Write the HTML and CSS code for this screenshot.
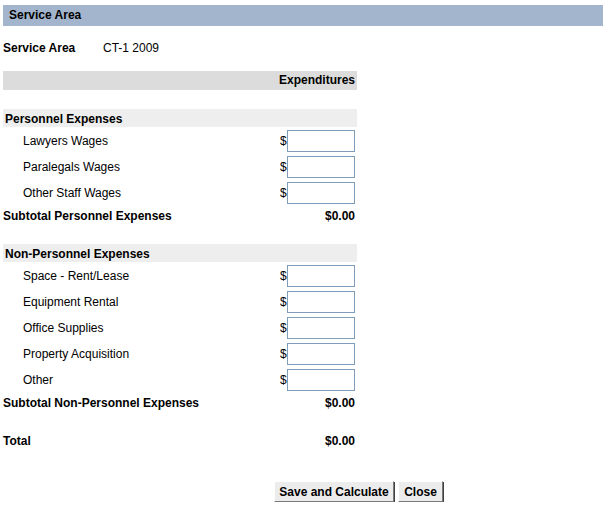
FILE: index.html
```html
<!DOCTYPE html>
<html>
<head>
<meta charset="utf-8">
<link rel="stylesheet" href="styles.css">
</head>
<body>
<div class="page">
  <div class="header">Service Area</div>
  <div class="svc"><span class="svc-label">Service Area</span><span class="svc-value">CT-1 2009</span></div>
  <div class="form">
    <div class="exp-bar">Expenditures</div>

    <div class="section-bar first">Personnel Expenses</div>
    <div class="rows">
      <div class="row"><span class="label">Lawyers Wages</span><span class="dollar">$</span><input class="amt" type="text"></div>
      <div class="row"><span class="label">Paralegals Wages</span><span class="dollar">$</span><input class="amt" type="text"></div>
      <div class="row"><span class="label">Other Staff Wages</span><span class="dollar">$</span><input class="amt" type="text"></div>
    </div>
    <div class="subtotal sub1"><span>Subtotal Personnel Expenses</span><span>$0.00</span></div>

    <div class="section-bar second">Non-Personnel Expenses</div>
    <div class="rows">
      <div class="row"><span class="label">Space - Rent/Lease</span><span class="dollar">$</span><input class="amt" type="text"></div>
      <div class="row"><span class="label">Equipment Rental</span><span class="dollar">$</span><input class="amt" type="text"></div>
      <div class="row"><span class="label">Office Supplies</span><span class="dollar">$</span><input class="amt" type="text"></div>
      <div class="row"><span class="label">Property Acquisition</span><span class="dollar">$</span><input class="amt" type="text"></div>
      <div class="row"><span class="label">Other</span><span class="dollar">$</span><input class="amt" type="text"></div>
    </div>
    <div class="subtotal sub2"><span>Subtotal Non-Personnel Expenses</span><span>$0.00</span></div>

    <div class="subtotal total"><span>Total</span><span>$0.00</span></div>
  </div>
  <div class="buttons">
    <button class="btn save" type="button">Save and Calculate</button>
    <button class="btn close" type="button">Close</button>
  </div>
</div>
</body>
</html>
```
FILE: styles.css
```css
html, body {
  margin: 0;
  padding: 0;
  background: #ffffff;
}
body {
  font-family: "Liberation Sans", Arial, sans-serif;
  font-size: 12px;
  color: #000000;
}
.page {
  padding: 5px 0 0 3px;
}
.header {
  width: 594px;
  height: 21px;
  line-height: 21px;
  padding-left: 6px;
  background: #a3b5cc;
  font-weight: bold;
}
.svc {
  display: flex;
  height: 20px;
  line-height: 20px;
  margin-top: 12px;
}
.svc-label {
  width: 100px;
  font-weight: bold;
}
.form {
  width: 354px;
}
.exp-bar {
  margin-top: 13px;
  height: 19px;
  line-height: 19px;
  background: #dcdcdc;
  text-align: right;
  padding-right: 2px;
  font-weight: bold;
}
.section-bar {
  height: 18px;
  line-height: 20px;
  background: #eeeeee;
  font-weight: bold;
  padding-left: 2px;
}
.section-bar.first { margin-top: 19px; }
.section-bar.second { margin-top: 19px; }
.rows {
  display: flex;
  flex-direction: column;
  gap: 4px;
  margin-top: 3px;
}
.row {
  display: flex;
  align-items: center;
  height: 22px;
  padding-right: 2px;
}
.label {
  padding-left: 20px;
  flex: 1;
  min-width: 0;
}
.dollar {
  flex: 0 0 auto;
  width: 7px;
  text-align: left;
}
.amt {
  flex: 0 0 68px;
  box-sizing: border-box;
  width: 68px;
  height: 22px;
  margin: 0;
  border: 1px solid #7f9db9;
  border-radius: 0;
  background: #ffffff;
  padding: 0 2px;
  font-family: inherit;
  font-size: 12px;
  outline: none;
}
.subtotal {
  display: flex;
  justify-content: space-between;
  height: 18px;
  line-height: 18px;
  font-weight: bold;
  padding-right: 2px;
}
.sub1 { margin-top: 3px; }
.sub2 { margin-top: 3px; }
.total { margin-top: 20px; }
.buttons {
  display: flex;
  gap: 4px;
  margin-top: 31px;
  padding-left: 271px;
}
.btn {
  box-sizing: border-box;
  height: 21px;
  margin: 0;
  padding: 0;
  white-space: nowrap;
  font-family: inherit;
  font-size: 12px;
  font-weight: bold;
  color: #000000;
  background: #ececec;
  border: 1px solid;
  border-color: #ffffff #7a7a7a #7a7a7a #ffffff;
  border-radius: 0;
  box-shadow: 1px 1px 0 #404040;
}
.btn.save { width: 120px; }
.btn.close { width: 45px; }
```
